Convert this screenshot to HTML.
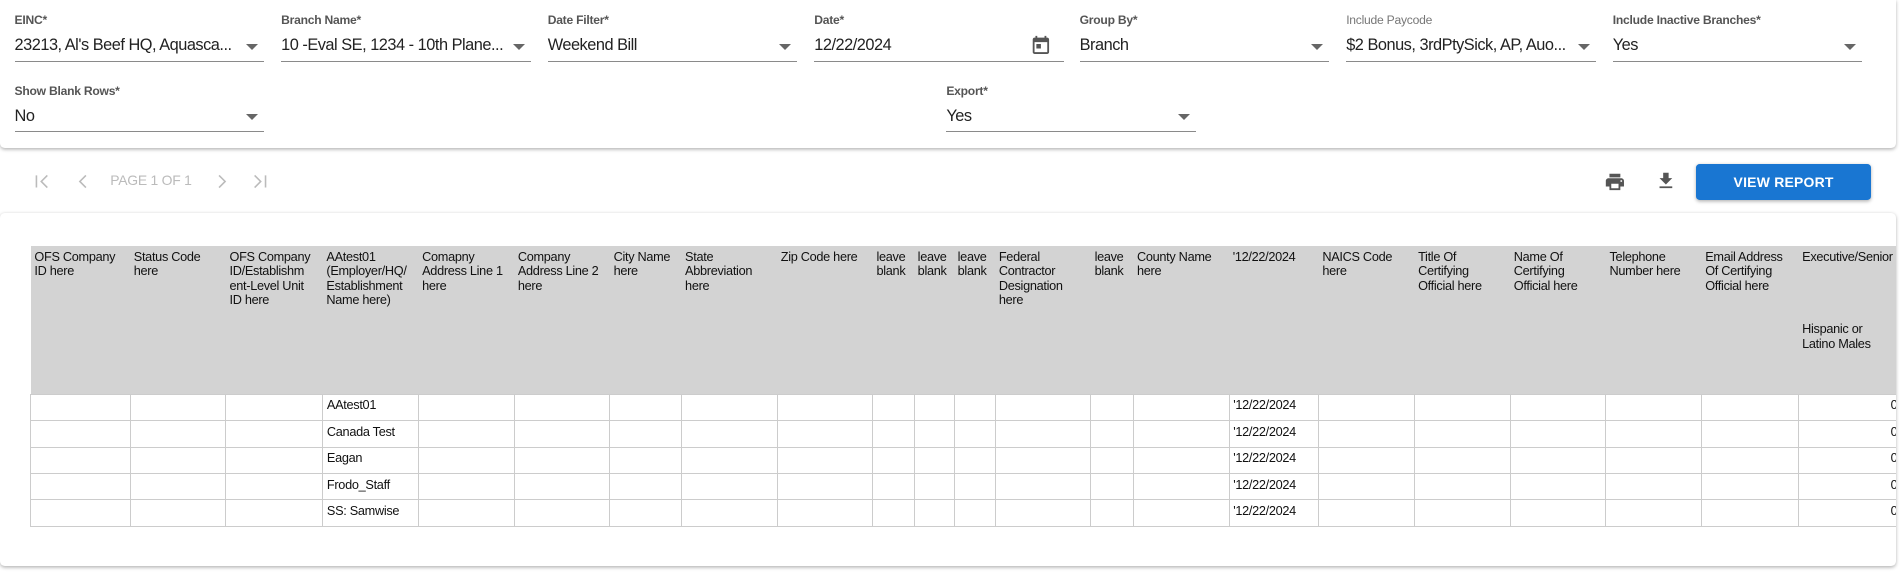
<!DOCTYPE html>
<html><head><meta charset="utf-8">
<style>
html,body{margin:0;padding:0;background:#fff;}
body{width:1900px;height:576px;overflow:hidden;}
#z{zoom:1.2117;width:1568px;height:476px;position:relative;font-family:"Liberation Sans",sans-serif;}
.card1{position:absolute;left:0;top:0;width:1565px;height:122px;background:#fff;box-shadow:0 1px 3px rgba(0,0,0,.3);border-radius:0 0 4px 4px;}
.f{position:absolute;width:206px;height:50px;border-bottom:1px solid #8a8a8a;}
.f .l{position:absolute;top:11px;left:0;font-size:10px;font-weight:bold;color:#555;white-space:nowrap;letter-spacing:-.2px}
.f .l.n{font-weight:normal;color:#777}
.f .v{position:absolute;top:30px;left:0;font-size:13.5px;color:#222;white-space:nowrap;letter-spacing:-.4px}
.f .a{position:absolute;right:5px;top:36px;width:0;height:0;border-left:5px solid transparent;border-right:5px solid transparent;border-top:5px solid #666;}
.pg{position:absolute;top:142px;font-size:11.5px;color:#bbb;letter-spacing:-.2px}
.card2{position:absolute;left:0;top:176px;width:1565px;height:291px;background:#fff;box-shadow:0 1px 3px rgba(0,0,0,.3);border-radius:4px;overflow:hidden}
.tw{position:absolute;left:25px;top:27px;width:1540px;height:260px;overflow:hidden}
table{border-collapse:collapse;table-layout:fixed;font-family:"Liberation Sans",Arial,sans-serif;font-size:10.5px;letter-spacing:-.25px;color:#111;width:1543px}
th{background:#d3d3d3;height:119px;vertical-align:top;text-align:left;font-weight:normal;padding:3px 3px 0 3px;line-height:12px;border:none}
td{height:18px;border:1px solid #ccc;vertical-align:top;padding:3px 3px 0 3px;line-height:12px;white-space:nowrap;overflow:hidden}
.btn{position:absolute;left:1400px;top:135px;width:144px;height:30px;background:#1976d2;border-radius:3px;color:#fff;font-size:11.5px;font-weight:bold;text-align:center;line-height:30px;letter-spacing:.2px;box-shadow:0 1px 3px rgba(0,0,0,.3)}
</style></head><body><div id="z">
<div class="card1">
<div class="f" style="left:12px;top:0"><div class="l">EINC*</div><div class="v">23213, Al's Beef HQ, Aquasca...</div><div class="a"></div></div>
<div class="f" style="left:232px;top:0"><div class="l">Branch Name*</div><div class="v">10 -Eval SE, 1234 - 10th Plane...</div><div class="a"></div></div>
<div class="f" style="left:452px;top:0"><div class="l">Date Filter*</div><div class="v">Weekend Bill</div><div class="a"></div></div>
<div class="f" style="left:672px;top:0"><div class="l">Date*</div><div class="v">12/22/2024</div>
<svg style="position:absolute;right:10px;top:28px" width="18" height="18" viewBox="0 0 24 24"><path fill="#555" d="M19 4h-1V2h-2v2H8V2H6v2H5c-1.1 0-2 .9-2 2v14c0 1.1.9 2 2 2h14c1.1 0 2-.9 2-2V6c0-1.1-.9-2-2-2zm0 16H5V9h14v11zM7 11h5v5H7z"/></svg></div>
<div class="f" style="left:891px;top:0"><div class="l">Group By*</div><div class="v">Branch</div><div class="a"></div></div>
<div class="f" style="left:1111px;top:0"><div class="l n">Include Paycode</div><div class="v">$2 Bonus, 3rdPtySick, AP, Auo...</div><div class="a"></div></div>
<div class="f" style="left:1331px;top:0"><div class="l">Include Inactive Branches*</div><div class="v">Yes</div><div class="a"></div></div>
<div class="f" style="left:12px;top:58px"><div class="l">Show Blank Rows*</div><div class="v">No</div><div class="a"></div></div>
<div class="f" style="left:781px;top:58px"><div class="l">Export*</div><div class="v">Yes</div><div class="a"></div></div>
</div>
<svg style="position:absolute;left:28px;top:143px" width="14" height="14" viewBox="0 0 14 14" fill="none" stroke="#bbb" stroke-width="1.3"><path d="M2 2v10M11 2L6 7l5 5"/></svg>
<svg style="position:absolute;left:62px;top:143px" width="14" height="14" viewBox="0 0 14 14" fill="none" stroke="#bbb" stroke-width="1.3"><path d="M9 2L4 7l5 5"/></svg>
<div class="pg" style="left:91px">PAGE 1 OF 1</div>
<svg style="position:absolute;left:176px;top:143px" width="14" height="14" viewBox="0 0 14 14" fill="none" stroke="#bbb" stroke-width="1.3"><path d="M5 2l5 5-5 5"/></svg>
<svg style="position:absolute;left:207px;top:143px" width="14" height="14" viewBox="0 0 14 14" fill="none" stroke="#bbb" stroke-width="1.3"><path d="M3 2l5 5-5 5M12 2v10"/></svg>
<svg style="position:absolute;left:1324px;top:141px" width="18" height="18" viewBox="0 0 24 24"><path fill="#555" d="M19 8H5c-1.66 0-3 1.34-3 3v6h4v4h12v-4h4v-6c0-1.66-1.34-3-3-3zm-3 11H8v-5h8v5zm3-7c-.55 0-1-.45-1-1s.45-1 1-1 1 .45 1 1-.45 1-1 1zm-1-9H6v4h12V3z"/></svg>
<svg style="position:absolute;left:1366px;top:140px" width="18" height="18" viewBox="0 0 24 24"><path fill="#555" d="M19 9h-4V3H9v6H5l7 7 7-7zM5 18v2h14v-2H5z"/></svg>
<div class="btn">VIEW REPORT</div>
<div class="card2"><div class="tw">
<table>
<colgroup><col style="width:82px"><col style="width:79px"><col style="width:80px"><col style="width:79px"><col style="width:79px"><col style="width:79px"><col style="width:59px"><col style="width:79px"><col style="width:79px"><col style="width:34px"><col style="width:33px"><col style="width:34px"><col style="width:79px"><col style="width:35px"><col style="width:79px"><col style="width:74px"><col style="width:79px"><col style="width:79px"><col style="width:79px"><col style="width:79px"><col style="width:80px"><col style="width:85px"></colgroup>
<tr><th>OFS Company ID here</th><th>Status Code here</th><th style="white-space:nowrap">OFS Company<br>ID/Establishm<br>ent-Level Unit<br>ID here</th><th>AAtest01 (Employer/HQ/ Establishment Name here)</th><th>Comapny Address Line 1 here</th><th>Company Address Line 2 here</th><th>City Name here</th><th>State Abbreviation here</th><th>Zip Code here</th><th>leave blank</th><th>leave blank</th><th>leave blank</th><th>Federal Contractor Designation here</th><th>leave blank</th><th>County Name here</th><th>'12/22/2024</th><th>NAICS Code here</th><th>Title Of Certifying Official here</th><th>Name Of Certifying Official here</th><th>Telephone Number here</th><th>Email Address Of Certifying Official here</th><th style="white-space:nowrap;overflow:hidden">Executive/Senior Level<div style="margin-top:48px;white-space:normal">Hispanic or Latino Males</div></th></tr>
<tr><td></td><td></td><td></td><td>AAtest01</td><td></td><td></td><td></td><td></td><td></td><td></td><td></td><td></td><td></td><td></td><td></td><td>'12/22/2024</td><td></td><td></td><td></td><td></td><td></td><td style="text-align:right">0</td></tr>
<tr><td></td><td></td><td></td><td>Canada Test</td><td></td><td></td><td></td><td></td><td></td><td></td><td></td><td></td><td></td><td></td><td></td><td>'12/22/2024</td><td></td><td></td><td></td><td></td><td></td><td style="text-align:right">0</td></tr>
<tr><td></td><td></td><td></td><td>Eagan</td><td></td><td></td><td></td><td></td><td></td><td></td><td></td><td></td><td></td><td></td><td></td><td>'12/22/2024</td><td></td><td></td><td></td><td></td><td></td><td style="text-align:right">0</td></tr>
<tr><td></td><td></td><td></td><td>Frodo_Staff</td><td></td><td></td><td></td><td></td><td></td><td></td><td></td><td></td><td></td><td></td><td></td><td>'12/22/2024</td><td></td><td></td><td></td><td></td><td></td><td style="text-align:right">0</td></tr>
<tr><td></td><td></td><td></td><td>SS: Samwise</td><td></td><td></td><td></td><td></td><td></td><td></td><td></td><td></td><td></td><td></td><td></td><td>'12/22/2024</td><td></td><td></td><td></td><td></td><td></td><td style="text-align:right">0</td></tr>
</table>
</div></div>
</div></body></html>
